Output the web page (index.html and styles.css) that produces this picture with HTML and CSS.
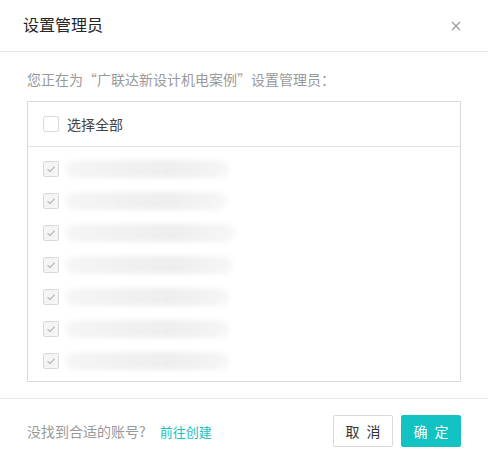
FILE: index.html
```html
<!DOCTYPE html>
<html lang="zh">
<head>
<meta charset="utf-8">
<link rel="stylesheet" href="styles.css">
</head>
<body>
<div class="modal">
  <div class="modal-header">
    <div class="modal-title">设置管理员</div>
    <svg class="close" width="10" height="10" viewBox="0 0 10 10"><path d="M1 1L9 9M9 1L1 9" stroke="#999" stroke-width="1.2" fill="none"/></svg>
  </div>
  <div class="modal-body">
    <div class="hint">您正在为“广联达新设计机电案例”设置管理员：</div>
    <div class="box">
      <div class="box-head">
        <span class="cb"></span><span class="all">选择全部</span>
      </div>
      <div class="list">
        <div class="row"><span class="cb checked"><svg viewBox="0 0 16 16"><path d="M4 8.2L6.8 10.8L12 5.4" stroke="#bdbdbd" stroke-width="1.6" fill="none"/></svg></span><span class="blur" style="width:164px"></span></div>
        <div class="row"><span class="cb checked"><svg viewBox="0 0 16 16"><path d="M4 8.2L6.8 10.8L12 5.4" stroke="#bdbdbd" stroke-width="1.6" fill="none"/></svg></span><span class="blur" style="width:162px"></span></div>
        <div class="row"><span class="cb checked"><svg viewBox="0 0 16 16"><path d="M4 8.2L6.8 10.8L12 5.4" stroke="#bdbdbd" stroke-width="1.6" fill="none"/></svg></span><span class="blur" style="width:170px"></span></div>
        <div class="row"><span class="cb checked"><svg viewBox="0 0 16 16"><path d="M4 8.2L6.8 10.8L12 5.4" stroke="#bdbdbd" stroke-width="1.6" fill="none"/></svg></span><span class="blur" style="width:168px"></span></div>
        <div class="row"><span class="cb checked"><svg viewBox="0 0 16 16"><path d="M4 8.2L6.8 10.8L12 5.4" stroke="#bdbdbd" stroke-width="1.6" fill="none"/></svg></span><span class="blur" style="width:164px"></span></div>
        <div class="row"><span class="cb checked"><svg viewBox="0 0 16 16"><path d="M4 8.2L6.8 10.8L12 5.4" stroke="#bdbdbd" stroke-width="1.6" fill="none"/></svg></span><span class="blur" style="width:164px"></span></div>
        <div class="row"><span class="cb checked"><svg viewBox="0 0 16 16"><path d="M4 8.2L6.8 10.8L12 5.4" stroke="#bdbdbd" stroke-width="1.6" fill="none"/></svg></span><span class="blur" style="width:164px"></span></div>
      </div>
    </div>
  </div>
  <div class="modal-footer">
    <div class="foot-left"><span class="muted">没找到合适的账号?</span><a class="link">前往创建</a></div>
    <div class="btns">
      <button class="btn">取 消</button>
      <button class="btn primary">确 定</button>
    </div>
  </div>
</div>
</body>
</html>
```
FILE: styles.css
```css
* { box-sizing: border-box; }
html, body { margin: 0; padding: 0; background: #fff; }
body {
  font-family: "Noto Sans CJK SC", "Noto Sans", sans-serif;
  font-size: 14px;
  color: #333;
  width: 488px;
  height: 463px;
  overflow: hidden;
}
.modal { display: flex; flex-direction: column; height: 463px; }
.modal-header {
  height: 52px;
  border-bottom: 1px solid #e8e8e8;
  display: flex;
  align-items: center;
  justify-content: space-between;
  padding: 0 27px 0 23px;
}
.modal-title { font-size: 16px; color: #262626; line-height: 22px; margin-top: -4px; }
.close { display: block; margin-top: 1px; }
.modal-body { padding: 16px 27px 0 27px; flex: 1; }
.hint { color: #999; line-height: 22px; height: 22px; font-size: 14px; }
.box {
  margin-top: 11px;
  border: 1px solid #d9d9d9;
  height: 281px;
}
.box-head {
  height: 45px;
  border-bottom: 1px solid #e3e3e3;
  display: flex;
  align-items: center;
  padding-left: 15px;
}
.all { margin-left: 8px; color: #444; line-height: 20px; }
.cb {
  width: 16px; height: 16px;
  border: 1px solid #d9d9d9;
  border-radius: 2px;
  background: #fff;
  flex: none;
  display: block;
}
.cb.checked { background: #f5f5f5; }
.cb svg { display: block; width: 14px; height: 14px; }
.list { padding-top: 14px; display: flex; flex-direction: column; gap: 16px; padding-left: 15px; }
.row { display: flex; align-items: center; height: 16px; }
.blur {
  display: block;
  height: 18px;
  margin-left: 6px;
  border-radius: 9px;
  background: linear-gradient(90deg, #f6f6f6, #f1f1f1 35%, #eeeeee 65%, #f7f7f7);
  filter: blur(2.5px);
}
.modal-footer {
  height: 65px;
  border-top: 1px solid #e8e8e8;
  display: flex;
  align-items: center;
  justify-content: space-between;
  padding: 0 27px;
}
.foot-left { display: flex; align-items: center; }
.muted { color: #999; }
.link { color: #13c2c2; font-size: 13px; margin-left: 14px; }
.btns { display: flex; gap: 8px; }
.btn {
  width: 60px; height: 32px;
  border: 1px solid #d9d9d9;
  border-radius: 2px;
  background: #fff;
  color: #333;
  font-family: inherit;
  font-size: 14px;
  letter-spacing: 2px;
  text-indent: 2px;
  padding: 0;
}
.btn.primary { background: #13c2c2; border-color: #13c2c2; color: #fff; }
```
